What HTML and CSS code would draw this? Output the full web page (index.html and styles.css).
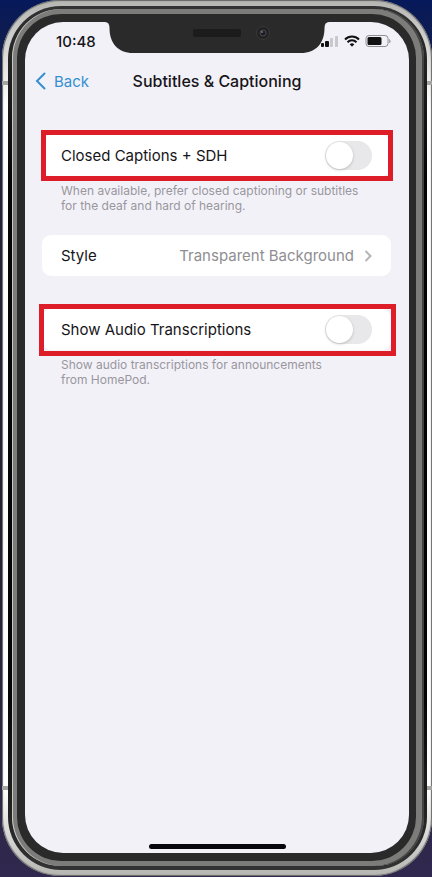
FILE: index.html
```
<!DOCTYPE html>
<html lang="en">

<head>
  <meta charset="UTF-8">
  <meta name="viewport" content="width=device-width, initial-scale=1.0">
  <title>Subtitles &amp; Captioning</title>

  <link rel="stylesheet" href="styles.css">
</head>

<body>
  <!-- Phone frame, outside to inside -->
  <div class="frame-steel">
    <div class="frame-groove">
      <div class="frame-rim">
        <div class="bezel">
          <div class="screen">

            <svg class="notch" width="224" height="32" viewBox="0 0 224 32" aria-hidden="true">
              <path d="M0 0C3 0 4.500 2 4.500 6C4.500 21 13 31 28 31H196C211 31 219.500 21 219.500 6C219.500 2 221 0 224 0Z" fill="#2a2a2b" />
              <rect x="88" y="7" width="48" height="8" rx="2" fill="#1c1c1d" />
              <circle cx="158" cy="11" r="6.500" fill="#222223" stroke="#39393b" />
              <circle cx="158" cy="11" r="3" fill="#1b1c22" stroke="#4a4a50" />
              <circle cx="157" cy="10" r="1" fill="#777780" />
            </svg>

            <div class="status">
              <span class="time">10:48</span>
              <svg class="status-icons" width="70" height="14" viewBox="0 0 70 14" aria-hidden="true">
                <!-- Signal -->
                <rect x="0" y="9" width="3" height="4" rx="1" fill="#111" />
                <rect x="4" y="7" width="4" height="6" rx="1" fill="#111" />
                <rect x="9" y="4" width="3" height="9" rx="1" fill="#c9c8cc" />
                <rect x="14" y="2" width="3" height="11" rx="1" fill="#c9c8cc" />
                <!-- Wi-Fi -->
                <g fill="none" stroke="#111" stroke-width="2">
                  <path d="M24 5.500C28 1.500 34 1.500 38 5.500" />
                  <path d="M26.500 8.200C29 5.700 33 5.700 35.500 8.200" />
                </g>
                <path d="M28.700 10.200Q31 8.300 33.300 10.200L31 12.800Z" fill="#111" />
                <!-- Battery -->
                <rect x="45" y="1.500" width="22" height="11" rx="3" fill="none" stroke="#8f8e93" />
                <rect x="46.500" y="3" width="14" height="8" rx="1.500" fill="#111" />
                <path d="M68.500 5.500Q70 7 68.500 9Z" fill="#a5a4a9" stroke="#a5a4a9" />
              </svg>
            </div>

            <header class="nav">
              <a class="back" href="#">
                <svg width="11" height="18" viewBox="0 0 11 18" aria-hidden="true">
                  <path d="M9.500 1.500L2 9L9.500 16.500" />
                </svg>
                Back
              </a>
              <h1>Subtitles &amp; Captioning</h1>
            </header>

            <main>
              <section>
                <div class="card marked">
                  <label for="closed-captions">Closed Captions + SDH</label>
                  <input type="checkbox" id="closed-captions" class="switch">
                </div>
                <p class="note">When available, prefer closed captioning or subtitles for the deaf and hard of hearing.</p>
              </section>

              <section class="style">
                <a class="card" href="#">
                  <span>Style</span>
                  <span class="value">
                    Transparent Background
                    <svg width="8" height="12" viewBox="0 0 8 12" aria-hidden="true">
                      <path d="M1.500 1L6.500 6L1.500 11" />
                    </svg>
                  </span>
                </a>
              </section>

              <section>
                <div class="card marked wide">
                  <label for="transcriptions">Show Audio Transcriptions</label>
                  <input type="checkbox" id="transcriptions" class="switch">
                </div>
                <p class="note short">Show audio transcriptions for announcements from HomePod.</p>
              </section>
            </main>

            <div class="home-bar"></div>
          </div>
        </div>
      </div>
    </div>
  </div>
</body>

</html>
```

FILE: styles.css
```
* {
  box-sizing: border-box;
}

body {
  margin: 0;
  min-height: 100vh;
  display: flex;
  padding: 0 0 1px 2px;
  background: linear-gradient(#06195a, #20223a 12%, #242331 60%, #30284e);
  font-family: Inter, "Liberation Sans", sans-serif;
  font-size: 15px;
  color: #161519;
}

a {
  color: inherit;
  text-decoration: none;
}

/* phone frame */
.frame-steel,
.frame-groove,
.frame-rim,
.bezel,
.screen {
  flex: 1;
  display: flex;
}

.frame-steel {
  position: relative;
  padding: 6px 5px 6px 6px;
  border-radius: 58px;
  background: linear-gradient(#b5b5b2, #fff 12%, #fff 90%, #b5b5b2);
  box-shadow: inset 0 0 1px 1px #666664;
}

/* antenna bands */
.frame-steel::before,
.frame-steel::after {
  content: "";
  position: absolute;
  left: 0;
  right: 0;
  height: 4px;
  background: #a5a5a3;
}

.frame-steel::before {
  top: 81px;
}

.frame-steel::after {
  bottom: 86px;
}

.frame-groove {
  position: relative;
  z-index: 1;
  padding: 3px 3px 4px 4px;
  border-radius: 53px;
  background: linear-gradient(#333, #050505 20%, #050505 80%, #333);
}

.frame-rim {
  padding: 5px 8px 5px 5px;
  border-radius: 49px;
  background: #7c7c7b;
  box-shadow: inset 1px 0 #c8c8c6, inset -2px 0 #444;
}

.bezel {
  padding: 8px 7px 8px 8px;
  border-radius: 44px;
  background: #2a2a2b;
}

.screen {
  position: relative;
  flex-direction: column;
  border-radius: 38px;
  background: #f3f1f8;
}

.notch {
  position: absolute;
  top: 0;
  left: 50%;
  transform: translateX(-50%);
}

/* status bar and title */
.status {
  height: 38px;
  padding: 0 18px 0 31px;
  display: flex;
  align-items: center;
  justify-content: space-between;
}

.time {
  font-weight: 500;
}

.nav {
  height: 42px;
  padding: 0 10px;
  display: grid;
  grid-template-columns: 1fr auto 1fr;
  align-items: center;
}

.back {
  display: flex;
  align-items: center;
  gap: 8px;
  color: #3490cf;
}

.back svg {
  fill: none;
  stroke: #3490cf;
  stroke-width: 2;
  stroke-linecap: round;
}

h1 {
  margin: 0;
  font-size: 16px;
  font-weight: 500;
}

/* settings */
main {
  flex: 1;
  padding: 33px 18px 33px 17px;
}

.card {
  position: relative;
  height: 41px;
  padding: 0 19px;
  display: flex;
  align-items: center;
  justify-content: space-between;
  border-radius: 9px;
  background: #fff;
}

.marked::after {
  content: "";
  position: absolute;
  inset: -5px -2px -5px -1px;
  border: 5px solid #dd1d27;
  pointer-events: none;
}

.wide::after {
  inset: -5px -5px -6px -3px;
}

.style {
  margin: 22px 0 33px;
}

.value {
  display: flex;
  align-items: center;
  gap: 10px;
  color: #8f8e92;
}

.value svg {
  fill: none;
  stroke: #b5b4b8;
  stroke-width: 2;
}

.note {
  margin: 0;
  padding: 7px 19px 0;
  font-size: 12px;
  line-height: 15px;
  color: #98979d;
}

.short {
  max-width: 310px;
}

.switch {
  appearance: none;
  width: 47px;
  height: 29px;
  margin: 0;
  padding: 1px;
  border-radius: 15px;
  background: #e8e7e9;
}

.switch::before {
  content: "";
  display: block;
  width: 27px;
  height: 27px;
  border-radius: 50%;
  background: #fff;
  box-shadow: 0 1px 3px #0003;
}

.switch:checked {
  background: #34c759;
}

.switch:checked::before {
  margin-left: 18px;
}

.home-bar {
  width: 137px;
  height: 5px;
  margin: 0 auto 4px;
  border-radius: 3px;
  background: #08070d;
}
```
